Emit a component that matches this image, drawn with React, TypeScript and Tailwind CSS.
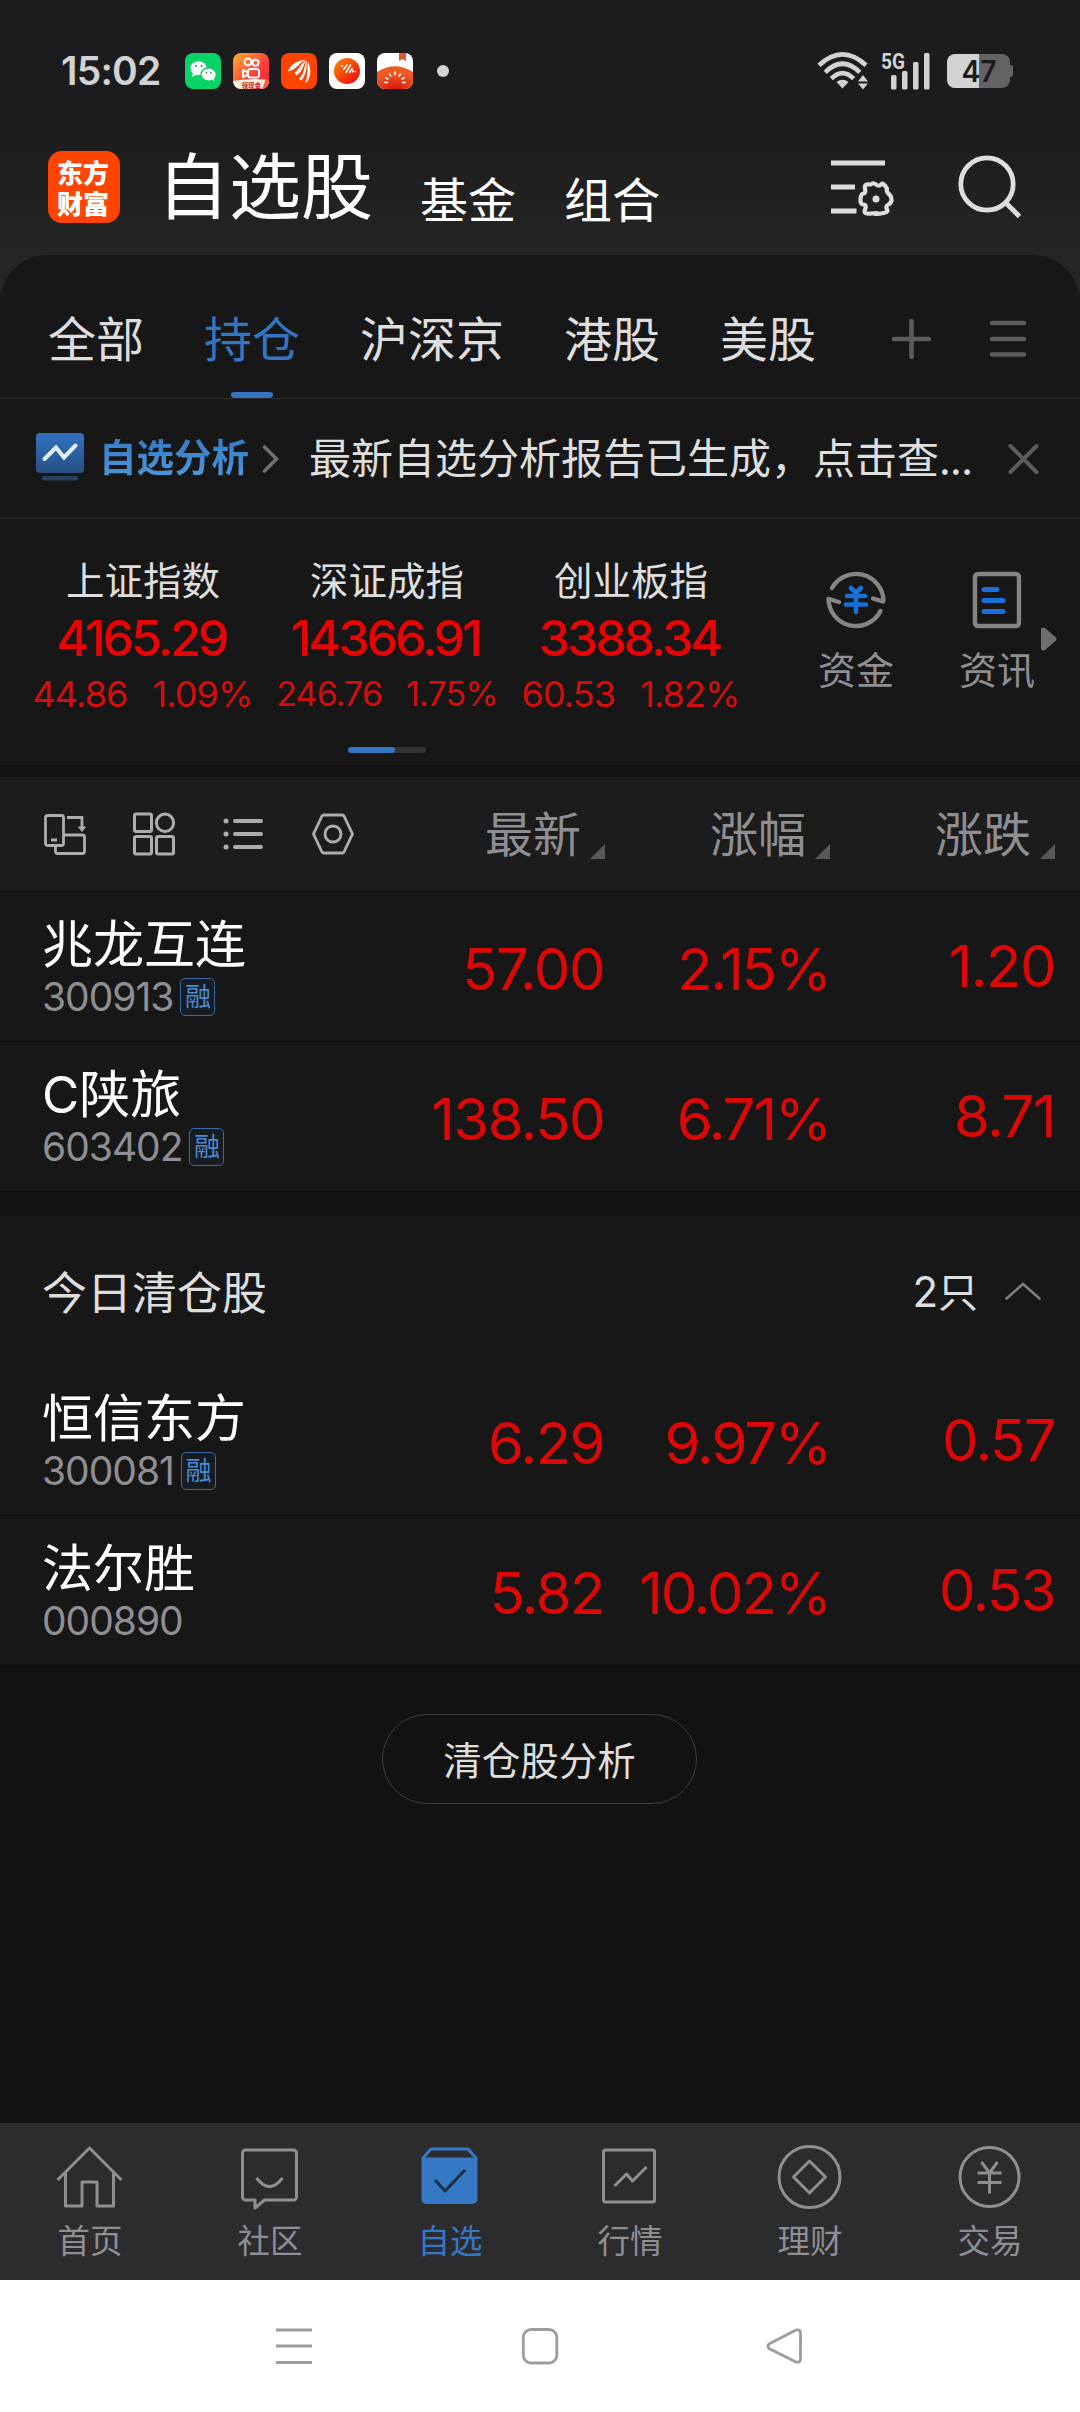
import type { ReactNode } from 'react';
import clsx from 'clsx';

const indices = [
  { name: '上证指数', value: '4165.29', change: '44.86', pct: '1.09%' },
  { name: '深证成指', value: '14366.91', change: '246.76', pct: '1.75%' },
  { name: '创业板指', value: '3388.34', change: '60.53', pct: '1.82%' },
];

const holdings = [
  { name: '兆龙互连', code: '300913', margin: true, price: '57.00', pct: '2.15%', diff: '1.20' },
  { name: 'C陕旅', code: '603402', margin: true, price: '138.50', pct: '6.71%', diff: '8.71' },
];

const cleared = [
  { name: '恒信东方', code: '300081', margin: true, price: '6.29', pct: '9.97%', diff: '0.57' },
  { name: '法尔胜', code: '000890', margin: false, price: '5.82', pct: '10.02%', diff: '0.53' },
];

type Stock = (typeof holdings)[number];

function StatusBar() {
  return (
    <div className="flex h-[142px] items-center pl-[61px] pr-[67px]">
      <span className="w-[124px] font-[Inter] text-[39px] font-semibold tracking-[-0.8px] text-[#d2d2d2]">15:02</span>
      <div className="flex gap-3">
        {/* WeChat */}
        <svg width="36" height="36" viewBox="0 0 36 36">
          <rect width="36" height="36" rx="8" fill="#07d366" />
          <ellipse cx="13.5" cy="15.2" rx="8" ry="7" fill="#fff" />
          <path d="M8 20l-1 4 4-2z" fill="#fff" />
          <ellipse cx="23.5" cy="21.2" rx="8" ry="7" fill="#07d366" />
          <ellipse cx="23.7" cy="21.5" rx="7" ry="6" fill="#fff" />
          <path d="M27 26l2.200 2.200v-4z" fill="#fff" />
          <circle cx="11" cy="13" r="1" fill="#07a352" />
          <circle cx="16.500" cy="13" r="1" fill="#07a352" />
          <circle cx="21.500" cy="19.800" r=".9" fill="#07a352" />
          <circle cx="26" cy="19.800" r=".9" fill="#07a352" />
        </svg>
        {/* Kuaishou */}
        <svg width="36" height="36" viewBox="0 0 36 36">
          <defs>
            <linearGradient id="ks" x1="0" y1="0" x2="1" y2="1">
              <stop offset="0" stopColor="#ffb02e" />
              <stop offset=".6" stopColor="#ff3d3d" />
              <stop offset="1" stopColor="#e8203c" />
            </linearGradient>
            <clipPath id="ksClip">
              <rect width="36" height="36" rx="8" />
            </clipPath>
          </defs>
          <g clipPath="url(#ksClip)">
            <rect width="36" height="36" fill="url(#ks)" />
            <g fill="none" stroke="#fff" strokeWidth="2">
              <circle cx="15" cy="9" r="3.400" />
              <circle cx="22.500" cy="9.800" r="3" />
              <rect x="15" y="16" width="11" height="8.500" rx="2.500" />
              <path d="M15 19.500l-5-2.500v7l5-2.500" strokeLinejoin="round" />
            </g>
            <path d="M0 28q18-3.500 36-1v9H0z" fill="#fff0dc" />
            <text x="8.500" y="34.500" fontSize="6.500" fontWeight="700" fill="#c8141e" className="font-['Noto_Sans_CJK_SC',sans-serif]">领现金</text>
            <path d="M28 36q3-2 4-9h4v9z" fill="#ff5a3c" />
          </g>
        </svg>
        {/* East Money */}
        <svg width="36" height="36" viewBox="0 0 36 36">
          <rect width="36" height="36" rx="8" fill="#ff4400" />
          <g fill="#fff">
            <path d="M7 18.500C9 12 15 7.500 24.500 7 19 9.500 17 13.500 11.500 17z" />
            <path d="M13.500 20C18.500 16 19.500 10.500 25 7.500 22 12 22.500 17.500 15.500 22.500z" />
            <path d="M18 26C24 20 23 12 26 7.500 25.300 13 26.500 19.500 20.500 27.500z" />
            <path d="M24 30C27.500 22 26 16 27 9 29.500 14 31 22 26 29z" />
          </g>
        </svg>
        <svg width="36" height="36" viewBox="0 0 36 36">
          <defs>
            <linearGradient id="ball" x1="0" y1="0" x2="1" y2="1">
              <stop offset="0" stopColor="#ff8a00" />
              <stop offset="1" stopColor="#e60012" />
            </linearGradient>
          </defs>
          <rect width="36" height="36" rx="8" fill="#fff" />
          <circle cx="18" cy="18" r="13" fill="url(#ball)" />
          <path d="M12.500 12.500l1 1M14.500 16.500l3.500-4.500M17 19.500l4.500-7.500M20.500 19.500l2.500-4M24.300 17.500l-.8 1.300M26.300 18.500l.1.100" stroke="#fff" strokeWidth="1.500" strokeLinecap="round" />
        </svg>
        {/* Tomato novel */}
        <svg width="36" height="36" viewBox="0 0 36 36">
          <defs>
            <radialGradient id="tomato" cx=".5" cy="1" r=".7">
              <stop offset="0" stopColor="#d81408" />
              <stop offset="1" stopColor="#ee5a24" />
            </radialGradient>
            <clipPath id="tomatoClip">
              <rect width="36" height="36" rx="8" />
            </clipPath>
          </defs>
          <g clipPath="url(#tomatoClip)">
            <rect width="36" height="36" fill="#fff" />
            <path d="M0 19Q18 7.500 36 19v17H0z" fill="url(#tomato)" />
            <path d="M22 0h7v8l-3.500-2L22 8z" fill="#e2542c" />
            <path d="M18 19v2.500M12.500 21l1.200 2M23.500 21l-1.200 2M9 25l2 1M27 25l-2 1M8 29.500h2.500M25.500 29.500h2.500" stroke="#fff" strokeWidth="1.600" strokeLinecap="round" />
          </g>
        </svg>
      </div>
      <span className="ml-6 size-3 rounded-full bg-[#d2d2d2]" />

      <div className="ml-auto flex items-center">
        <svg width="52" height="40" viewBox="0 0 52 40" fill="none" className="mr-3">
          <g stroke="#d2d2d2" strokeWidth="4.600">
            <path d="M2 14.300Q25.500-7.500 49 14.300" />
            <path d="M8.200 21.300Q25.500 4.200 42.800 21.300" />
            <path d="M14.300 27.700Q25.500 16.500 36.700 27.700" />
          </g>
          <path d="M19.500 31Q25.500 26.500 31.500 31L25.500 37.500z" fill="#d2d2d2" />
          <path d="M41 30.500l5-6.500 5 6.500zM41 32.500l5 6 5-6z" fill="#d2d2d2" />
        </svg>
        <svg width="50" height="40" viewBox="0 0 50 40" className="mr-4">
          <text x="0" y="17.500" fontSize="22" fontWeight="700" fill="#d2d2d2" textLength="24" lengthAdjust="spacingAndGlyphs" className="font-[Roboto]">5G</text>
          <rect x="10" y="24" width="5.500" height="14.500" rx="1.500" fill="#d2d2d2" />
          <rect x="21" y="20" width="5.500" height="18.500" rx="1.500" fill="#d2d2d2" />
          <rect x="32" y="11" width="5.500" height="27.500" rx="1.500" fill="#d2d2d2" />
          <rect x="43" y="2" width="5.500" height="36.500" rx="1.500" fill="#d2d2d2" />
        </svg>
        <svg width="66" height="36" viewBox="0 0 66 36">
          <path d="M32 1h23a8 8 0 0 1 8 8v18a8 8 0 0 1-8 8H32z" fill="#636363" />
          <rect x="62" y="12" width="4" height="12" rx="2" fill="#636363" />
          <path d="M32 1H8a8 8 0 0 0-8 8v18a8 8 0 0 0 8 8h24z" fill="#d2d2d2" />
          <text x="32" y="29" fontSize="30" fontWeight="600" textAnchor="middle" fill="#1c1d1f" textLength="35" lengthAdjust="spacingAndGlyphs" className="font-[Inter]">47</text>
        </svg>
      </div>
    </div>
  );
}

function Header() {
  return (
    <div className="flex h-[113px] items-start pl-12 pr-[58px]">
      <div className="mt-[9px] size-[72px] rounded-[14px] bg-[#ff4400] px-[9px] pt-[5px] text-[26px] leading-[31px] font-black break-all text-white">东方财富</div>
      <h1 className="ml-[37px] -mt-[5px] text-[72px] leading-[90px] text-white">自选股</h1>
      <span className="ml-[47px] mt-7 text-[48px] leading-[54px] text-white">基金</span>
      <span className="ml-12 mt-7 text-[48px] leading-[54px] text-white">组合</span>
      <svg width="64" height="60" viewBox="0 0 64 60" fill="none" stroke="#dedede" strokeWidth="4.800" className="ml-auto mt-4">
        <path d="M0 5h54M0 29h24M0 53h25.500" />
        <path
          d="M40 26.500q2-2.500 5 0t5 0 6 4q-1 3 1.500 5t3 5.500-3 5.500-1.500 5-6 4-5 0-5 0-6-4-1.500-5-3-5.500 3-5.500 1.500-5 5-4z"
          strokeWidth="4.200"
          strokeLinejoin="round"
        />
        <circle cx="45" cy="41" r="3.500" fill="#dedede" stroke="none" />
      </svg>
      <svg width="64" height="66" viewBox="0 0 64 66" fill="none" stroke="#dedede" strokeWidth="4.800" className="ml-[63px] mt-[13px]">
        <circle cx="29" cy="29" r="26.200" />
        <path d="M47.500 47.500l14 14" />
      </svg>
    </div>
  );
}

const tabs = ['全部', '持仓', '沪深京', '港股', '美股'];

function Tabs() {
  return (
    <div className="flex h-36 items-center border-b border-[#2b2b2b] pl-12 pr-[52px]">
      <div className="flex h-full gap-[60px]">
        {tabs.map((tab) => (
          <div
            key={tab}
            className={clsx(
              'relative flex h-full items-center pt-[19px] text-[48px] leading-none',
              tab === '持仓' ? 'text-[#3474c0]' : 'text-[#dedede]',
            )}
          >
            {tab}
            {tab === '持仓' && <span className="absolute bottom-0 left-[27px] h-1.5 w-[42px] rounded-full bg-[#3474c0]" />}
          </div>
        ))}
      </div>
      <svg width="40" height="40" viewBox="0 0 40 40" stroke="#5c5c5c" strokeWidth="4.600" strokeLinecap="round" className="ml-auto mt-6">
        <path d="M20.500 2v36M3 20h35" />
      </svg>
      <svg width="40" height="40" viewBox="0 0 40 40" stroke="#5c5c5c" strokeWidth="4.600" strokeLinecap="round" className="ml-[57px] mt-6">
        <path d="M4 4h32M4 20h32M4 35.500h32" />
      </svg>
    </div>
  );
}

function ReportBanner() {
  return (
    <div className="flex h-[120px] items-center border-b border-[#2b2b2b] pl-9 pr-[41px]">
      <svg width="48" height="48" viewBox="0 0 48 48" className="-mt-1">
        <defs>
          <linearGradient id="report" x1="0" y1="0" x2="0" y2="1">
            <stop offset="0" stopColor="#2f72c2" />
            <stop offset="1" stopColor="#274f80" />
          </linearGradient>
        </defs>
        <rect y="0" width="48" height="40" rx="4" fill="url(#report)" />
        <rect x="6" y="43" width="36" height="4.500" rx="2" fill="#24405f" />
        <path d="M8.500 26L20 14.500l8 10L39.500 12.500" fill="none" stroke="#e3eefc" strokeWidth="4" strokeLinecap="round" />
      </svg>
      <span className="ml-[15px] -mt-2 bg-gradient-to-b from-[#3375c4] to-[#4f97d8] bg-clip-text text-[37.500px] leading-[48px] font-bold text-transparent">自选分析</span>
      <svg width="18" height="30" viewBox="0 0 18 30" fill="none" stroke="#6e6e6e" strokeWidth="3.600" strokeLinecap="round" className="ml-[13px]">
        <path d="M2.500 3l12 12-12 12" />
      </svg>
      <span className="-mt-1.5 ml-[29px] text-[42px] leading-[50px] whitespace-nowrap text-[#dedede]">
        最新自选分析报告已生成，点击查<span className="tracking-[-0.6px]">...</span>
      </span>
      <svg width="32" height="32" viewBox="0 0 32 32" stroke="#5c5c5c" strokeWidth="4" strokeLinecap="round" className="ml-auto">
        <path d="M3.500 3l26 26M29.500 3l-26 26" />
      </svg>
    </div>
  );
}

function IndexPanel() {
  return (
    <div className="flex h-[246px]">
      <div className="w-[772px] pl-[21px]">
        <div className="grid grid-cols-[244px_244px_244px]">
          {indices.map((item) => (
            <div key={item.name} className="flex flex-col items-center">
              <span className="mt-[34px] text-[38.500px] leading-[50px] text-[#dedede]">{item.name}</span>
              <span className="mt-[7px] -ml-[3px] font-[Inter] text-[50px] leading-[56px] font-medium tracking-[-3px] text-[#e60404]">{item.value}</span>
              <div
                className={clsx(
                  'mt-[7px] flex font-[Inter] leading-[42px] text-[#d20e0e]',
                  item.change.length > 5 ? 'gap-6 text-[34px] tracking-[-0.9px]' : '-ml-px gap-[25px] text-[36px] tracking-[-0.9px]',
                )}
              >
                <span>{item.change}</span>
                <span>{item.pct}</span>
              </div>
            </div>
          ))}
        </div>
        <div className="mt-8 ml-[327px] h-1.5 w-[78px] rounded-full bg-[#333]">
          <div className="h-full w-[47px] rounded-full bg-[#3474c0]" />
        </div>
      </div>
      <div className="flex flex-1 text-[38px] leading-[50px] text-[#8e8e93]">
        <div className="ml-[46px] flex w-[76px] flex-col items-center pt-[49px]">
          <svg width="62" height="64" viewBox="0 0 62 64" fill="none" stroke="#848484" strokeWidth="4.400" strokeLinecap="round">
            <path d="M7 20A27.500 27.500 0 0 1 58.500 32.500M58 33.500l-10-3" strokeLinejoin="round" />
            <path d="M55.500 43A27.500 27.500 0 0 1 3.500 31M4 31l10 3" strokeLinejoin="round" />
            <path d="M26 20l5 5 5-5M22 28h18M21 36.500h20M31 26v18" stroke="#1a70d8" strokeWidth="4.600" />
          </svg>
          <span className="mt-[11px]">资金</span>
        </div>
        <div className="ml-[65px] flex w-[76px] flex-col items-center pt-[49px]">
          <svg width="62" height="64" viewBox="0 0 62 64" fill="none" strokeLinecap="round">
            <rect x="9" y="6" width="44" height="52" rx="3" stroke="#848484" strokeWidth="4.400" />
            <path d="M18 21.500h13M18 32.500h19M18 43.500h19" stroke="#1a70d8" strokeWidth="5" />
          </svg>
          <span className="mt-[11px]">资讯</span>
        </div>
        <svg width="16" height="26" viewBox="0 0 16 26" className="ml-1.5 mt-[107px]">
          <path d="M0 3q1-2.500 4-1l11 9.500q1 1.500 0 3L4 24q-3 1.500-4-1z" fill="#6e6e6e" />
        </svg>
      </div>
    </div>
  );
}

function SortHeader({ children }: { children: ReactNode }) {
  return (
    <div className="flex items-center justify-end text-[48px] leading-none text-[#8e8e93]">
      <span className="-mt-[7px]">{children}</span>
      <svg width="15" height="15" viewBox="0 0 15 15" className="ml-[9px] mt-[34px]">
        <path d="M15 0v15H0z" fill="#58585a" />
      </svg>
    </div>
  );
}

function TableHeader() {
  return (
    <div className="grid h-[115px] grid-cols-[605px_225px_225px] border-b border-[#0d0d0d] bg-[#1c1c1c]">
      <div className="flex items-center">
        <div className="flex items-center gap-[45.500px] pl-[42px]">
          <svg width="44" height="44" viewBox="0 0 44 44" fill="none" stroke="#adadad" strokeWidth="2.800" strokeLinejoin="round">
            <rect x="3.500" y="3.500" width="18" height="30" rx="2" />
            <path d="M9 28h6M21.500 23h19a2 2 0 0 1 2 2v14.500a2 2 0 0 1-2 2h-25a2 2 0 0 1-2-2v-6M25 5.500h15V18" />
            <path d="M36.500 15l3.500 4.500 3.500-4.500z" fill="#adadad" strokeWidth="1" />
          </svg>
          <svg width="44" height="44" viewBox="0 0 44 44" fill="none" stroke="#adadad" strokeWidth="3">
            <rect x="2.500" y="2" width="17" height="17.500" rx="1.500" />
            <ellipse cx="33" cy="10.800" rx="8.600" ry="8.800" />
            <rect x="2.500" y="24.500" width="17" height="17.500" rx="1.500" />
            <rect x="24.500" y="24.500" width="17" height="17.500" rx="1.500" />
          </svg>
          <svg width="44" height="44" viewBox="0 0 44 44" stroke="#adadad" strokeWidth="4" strokeLinecap="round">
            <path d="M5 9h.1M5 22h.1M5 35h.1" strokeWidth="5" />
            <path d="M14 9h26M14 22h26M14 35h26" />
          </svg>
          <svg width="44" height="44" viewBox="0 0 44 44" fill="none" stroke="#adadad" strokeWidth="2.900" strokeLinejoin="round">
            <path d="M12.500 3h19l1.500 1 8.500 18L33 40l-1.500 1h-19L11 40 2.500 22 11 4z" />
            <circle cx="22" cy="22" r="8" />
          </svg>
        </div>
        <div className="ml-auto">
          <SortHeader>最新</SortHeader>
        </div>
      </div>
      <SortHeader>涨幅</SortHeader>
      <SortHeader>涨跌</SortHeader>
    </div>
  );
}

function StockRow({ stock }: { stock: Stock }) {
  return (
    <div className="grid h-[150px] grid-cols-[604px_226px_225px] border-b border-[#0d0d0d] bg-[#171717] font-[Inter] text-[58px] tracking-[-1.500px] text-[#dc0808]">
      <div className="flex justify-between pl-[42px]">
        <div className="pt-[22px]">
          <div className="font-[Inter,'Noto_Sans_CJK_SC',sans-serif] text-[51px] leading-[62px] tracking-normal text-white">{stock.name}</div>
          <div className="flex items-center text-[39px] leading-[42px] tracking-[-1px] text-[#8e8e93]">
            {stock.code}
            {stock.margin && (
              <span className="ml-[7px] flex h-[38px] w-[35px] items-center justify-center rounded-[5px] border border-[#3a6a9f] bg-[#161c22] pb-1 font-['Noto_Sans_CJK_SC',sans-serif] text-[26px] leading-none tracking-normal text-[#4c8ad0]">
                融
              </span>
            )}
          </div>
        </div>
        <div className="pt-11 leading-[66px]">{stock.price}</div>
      </div>
      <div className="pt-11 text-right leading-[66px] tracking-[-2px]">{stock.pct}</div>
      <div className="pt-[41px] text-right leading-[66px]">{stock.diff}</div>
    </div>
  );
}

function ClearedSection() {
  return (
    <div className="mt-6 bg-[#171717]">
      <div className="flex h-[150px] items-center pl-[42px] pr-[38px] text-[#dedede]">
        <span className="text-[45px] leading-[60px]">今日清仓股</span>
        <span className="ml-auto text-[40px] leading-[60px]">
          <span className="font-[Inter] text-[42px]">2</span>只
        </span>
        <svg width="38" height="20" viewBox="0 0 38 20" fill="none" stroke="#7e7e7e" strokeWidth="2.600" strokeLinecap="round" className="ml-[26px]">
          <path d="M2.500 17.500L19 3l16.500 14.500" />
        </svg>
      </div>
      {cleared.map((stock) => (
        <StockRow key={stock.code} stock={stock} />
      ))}
    </div>
  );
}

function NavItem({ label, active, children }: { label: string; active?: boolean; children: ReactNode }) {
  return (
    <div className={clsx('flex flex-1 flex-col items-center pt-[19px]', active ? 'text-[#3578c6]' : 'text-[#8e8e93]')}>
      <svg width="68" height="68" viewBox="0.500 0 68 68" fill="none" stroke="currentColor" strokeWidth="3" strokeLinejoin="round">
        {children}
      </svg>
      <span className="mt-[9px] text-[32.500px] leading-10">{label}</span>
    </div>
  );
}

function BottomNav() {
  return (
    <div className="flex h-[157px] bg-[#2c2c2e]">
      <NavItem label="首页">
        <path d="M2 38L34 6l32 32" />
        <path d="M10 31v33h16.500V40h15v24H58V31" />
      </NavItem>
      <NavItem label="社区">
        <path d="M10 8h48a3 3 0 0 1 3 3v44a3 3 0 0 1-3 3H29l-9.500 8V58H10a3 3 0 0 1-3-3V11a3 3 0 0 1 3-3z" />
        <path d="M21 36q13 17 26 0" />
      </NavItem>
      <NavItem label="自选" active>
        <path d="M7.500 16l8-9h37l8 9" />
        <path d="M6 15.500h56V57a5 5 0 0 1-5 5H11a5 5 0 0 1-5-5z" fill="currentColor" stroke="none" />
        <path d="M19.500 38l10 11 20-21" stroke="#1d2f45" strokeWidth="3" />
      </NavItem>
      <NavItem label="行情">
        <rect x="8" y="8" width="51" height="52" rx="2" />
        <path d="M19 44l12-12 6 7 14-14" />
      </NavItem>
      <NavItem label="理财">
        <circle cx="34" cy="35" r="30.500" />
        <path d="M34 19l16 16-16 16-16-16z" />
      </NavItem>
      <NavItem label="交易">
        <circle cx="34" cy="35" r="29.500" />
        <path d="M26 20l8 11 8-11M22 31h24M22 40.500h24M34 31v20.500" />
      </NavItem>
    </div>
  );
}

function SystemBar() {
  return (
    <div className="flex h-[132px] items-center justify-center gap-[207px] bg-white">
      <svg width="38" height="38" viewBox="0 0 38 38" stroke="#9c9c9c" strokeWidth="3">
        <path d="M0 3h36M0 19h36M0 35.500h36" />
      </svg>
      <svg width="38" height="38" viewBox="0 0 38 38" fill="none" stroke="#9c9c9c" strokeWidth="2.800">
        <rect x="2.300" y="2.500" width="33.500" height="33.500" rx="8" />
      </svg>
      <svg width="38" height="38" viewBox="0 0 38 38" fill="none" stroke="#9c9c9c" strokeWidth="2.800" strokeLinejoin="round">
        <path d="M3 17L30 3q4.500-1 4.500 3v26q0 4-4.500 3L3 21.500Q1 19.300 3 17z" />
      </svg>
    </div>
  );
}

export default function App() {
  return (
    <div className="flex h-[2412px] w-[1080px] flex-col overflow-hidden bg-[#121212] font-['Noto_Sans_CJK_SC',sans-serif]">
      <div className="bg-[#252525]">
        <div className="bg-gradient-to-b from-[#1c1c1e] from-50% to-[#252525]">
          <StatusBar />
          <Header />
        </div>
        <div className="rounded-t-[48px] bg-[#171717]">
          <Tabs />
          <ReportBanner />
          <IndexPanel />
        </div>
      </div>
      <div className="mt-3">
        <TableHeader />
        {holdings.map((stock) => (
          <StockRow key={stock.code} stock={stock} />
        ))}
      </div>
      <ClearedSection />
      <button className="mt-12 ml-[382px] h-[90px] w-[315px] rounded-full border border-[#3d3d3d] text-[38.500px] text-[#dedede]">清仓股分析</button>
      <div className="mt-auto">
        <BottomNav />
        <SystemBar />
      </div>
    </div>
  );
}
